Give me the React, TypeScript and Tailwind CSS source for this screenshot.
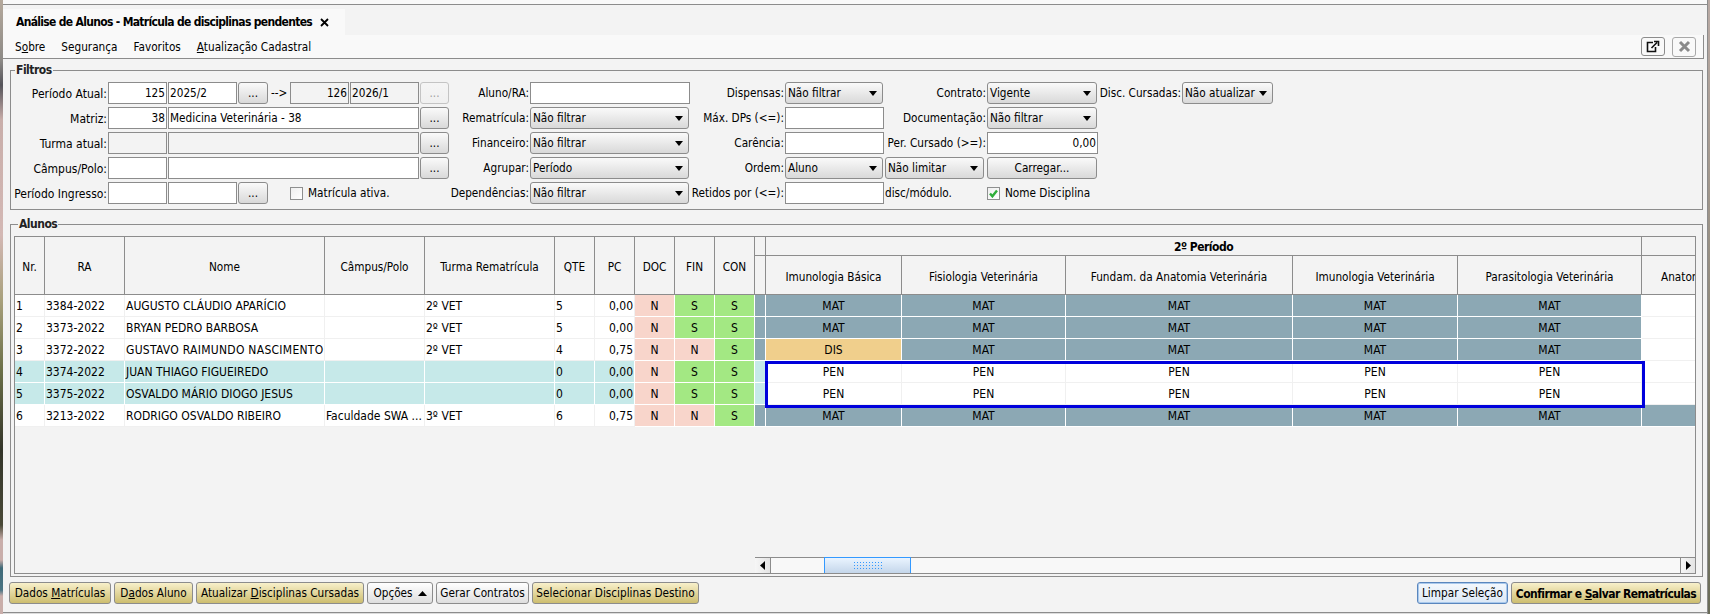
import React from "react";

type Tone = "mat" | "pen" | "dis" | "none" | "matEmpty";

interface IStudent {
  nr: string;
  ra: string;
  nome: string;
  nomeClass?: string;
  campus: string;
  turma: string;
  qte: string;
  pc: string;
  fin: string;
  teal?: boolean;
  disciplinas: Tone[];
}

const students: IStudent[] = [
  { nr: "1", ra: "3384-2022", nome: "AUGUSTO CLÁUDIO APARÍCIO", campus: "", turma: "2º VET", qte: "5", pc: "0,00", fin: "S", disciplinas: ["mat", "mat", "mat", "mat", "mat", "none"] },
  { nr: "2", ra: "3373-2022", nome: "BRYAN PEDRO BARBOSA", campus: "", turma: "2º VET", qte: "5", pc: "0,00", fin: "S", disciplinas: ["mat", "mat", "mat", "mat", "mat", "none"] },
  { nr: "3", ra: "3372-2022", nome: "GUSTAVO RAIMUNDO NASCIMENTO", nomeClass: "tracking-[0.28px]", campus: "", turma: "2º VET", qte: "4", pc: "0,75", fin: "N", disciplinas: ["dis", "mat", "mat", "mat", "mat", "none"] },
  { nr: "4", ra: "3374-2022", nome: "JUAN THIAGO FIGUEIREDO", campus: "", turma: "", qte: "0", pc: "0,00", fin: "S", teal: true, disciplinas: ["pen", "pen", "pen", "pen", "pen", "none"] },
  { nr: "5", ra: "3375-2022", nome: "OSVALDO MÁRIO DIOGO JESUS", campus: "", turma: "", qte: "0", pc: "0,00", fin: "S", teal: true, disciplinas: ["pen", "pen", "pen", "pen", "pen", "none"] },
  { nr: "6", ra: "3213-2022", nome: "RODRIGO OSVALDO RIBEIRO", campus: "Faculdade SWA ...", turma: "3º VET", qte: "6", pc: "0,75", fin: "N", disciplinas: ["mat", "mat", "mat", "mat", "mat", "matEmpty"] },
];

const Caret = () => (
  <svg width="8" height="5" viewBox="0 0 8 5" className="shrink-0">
    <path d="M0 0h8L4 5z" fill="#000" />
  </svg>
);

const Label = ({ text, span }: { text: string; span: string }) => (
  <div className={`${span} h-[22px] pt-px flex items-center justify-end pr-px whitespace-nowrap`}>{text}</div>
);

const Field = ({ value = "", span, off, right }: { value?: string; span: string; off?: boolean; right?: boolean }) => (
  <div
    className={`${span} h-[22px] mr-px pt-px border border-[#8c8c8c] flex items-center px-px whitespace-nowrap ${off ? "bg-[#f3f3f3]" : "bg-white"} ${right ? "justify-end" : ""}`}
  >
    {value}
  </div>
);

const Dots = ({ span, off }: { span: string; off?: boolean }) => (
  <div
    className={`${span} h-[22px] mr-px pt-[2px] rounded-[3px] border flex items-center justify-center bg-linear-to-b ${off ? "border-[#c4c4c4] from-[#f5f5f5] to-[#f0f0f0] text-[#a0a0a0]" : "border-[#8c8c8c] from-[#fafafa] to-[#d9d9d9]"}`}
  >
    ...
  </div>
);

const Select = ({ value, span }: { value: string; span: string }) => (
  <div className={`${span} h-[22px] mr-[2px] rounded-[3px] border border-[#8c8c8c] bg-linear-to-b from-[#fafafa] to-[#d9d9d9] flex items-center justify-between pl-[2px] pr-[5px] whitespace-nowrap`}>
    <span className="pt-px">{value}</span>
    <Caret />
  </div>
);

const Legend = ({ text }: { text: string }) => (
  <legend className="ml-[4px] px-px h-[14px] leading-[14px] font-bold tracking-[-0.5px] text-[12px] text-[#222]">{text}</legend>
);

const Filtros = () => (
  <fieldset className="ml-[7px] mr-[4px] mt-[4px] border border-[#8c8c8c] pt-[5px] pb-[5px]">
    <Legend text="Filtros" />
    <div className="grid gap-y-[3px] grid-cols-[97px_60px_70px_31px_21px_60px_70px_30px_80px_161px_94px_100px_102px_112px_83px_93px]">
      <Label span="col-start-1 text-[12px]" text="Período Atual:" />
      <Field span="col-start-2" value="125" right />
      <Field span="col-start-3" value="2025/2" />
      <Dots span="col-start-4" />
      <div className="col-start-5 h-[22px] pt-px flex items-center pl-[2px]">--&gt;</div>
      <Field span="col-start-6" value="126" right off />
      <Field span="col-start-7" value="2026/1" off />
      <Dots span="col-start-8" off />
      <Label span="col-start-9" text="Aluno/RA:" />
      <Field span="col-start-10" />
      <Label span="col-start-11" text="Dispensas:" />
      <Select span="col-start-12" value="Não filtrar" />
      <Label span="col-start-13" text="Contrato:" />
      <Select span="col-start-14" value="Vigente" />
      <Label span="col-start-15" text="Disc. Cursadas:" />
      <Select span="col-start-16" value="Não atualizar" />

      <Label span="col-start-1 text-[12px]" text="Matriz:" />
      <Field span="col-start-2" value="38" right />
      <Field span="col-start-3 col-end-8" value="Medicina Veterinária - 38" />
      <Dots span="col-start-8" />
      <Label span="col-start-9" text="Rematrícula:" />
      <Select span="col-start-10" value="Não filtrar" />
      <Label span="col-start-11" text="Máx. DPs (<=):" />
      <Field span="col-start-12 mr-[2px]" />
      <Label span="col-start-13" text="Documentação:" />
      <Select span="col-start-14" value="Não filtrar" />

      <Label span="col-start-1 text-[12px]" text="Turma atual:" />
      <Field span="col-start-2" off />
      <Field span="col-start-3 col-end-8" off />
      <Dots span="col-start-8" />
      <Label span="col-start-9" text="Financeiro:" />
      <Select span="col-start-10" value="Não filtrar" />
      <Label span="col-start-11" text="Carência:" />
      <Field span="col-start-12 mr-[2px]" />
      <Label span="col-start-13" text="Per. Cursado (>=):" />
      <Field span="col-start-14 mr-[2px]" value="0,00" right />

      <Label span="col-start-1 text-[12px]" text="Câmpus/Polo:" />
      <Field span="col-start-2" />
      <Field span="col-start-3 col-end-8" />
      <Dots span="col-start-8" />
      <Label span="col-start-9" text="Agrupar:" />
      <Select span="col-start-10" value="Período" />
      <Label span="col-start-11" text="Ordem:" />
      <Select span="col-start-12" value="Aluno" />
      <Select span="col-start-13 mr-[3px]" value="Não limitar" />
      <div className="col-start-14 h-[22px] mr-[2px] pt-px rounded-[3px] border border-[#8c8c8c] bg-linear-to-b from-[#fafafa] to-[#d9d9d9] flex items-center justify-center">
        Carregar...
      </div>

      <Label span="col-start-1 text-[12px]" text="Período Ingresso:" />
      <Field span="col-start-2" />
      <Field span="col-start-3" />
      <Dots span="col-start-4" />
      <div className="col-start-6 col-end-9 h-[22px] pt-px flex items-center gap-[5px]">
        <span className="w-[13px] h-[13px] border border-[#8e8f8f] bg-linear-to-br from-[#efefef] to-white" />
        Matrícula ativa.
      </div>
      <Label span="col-start-9" text="Dependências:" />
      <Select span="col-start-10" value="Não filtrar" />
      <Label span="col-start-11" text="Retidos por (<=):" />
      <Field span="col-start-12 mr-[2px]" />
      <div className="col-start-13 h-[22px] pt-px flex items-center">disc/módulo.</div>
      <div className="col-start-14 col-end-16 h-[22px] pt-px flex items-center gap-[5px]">
        <span className="w-[13px] h-[13px] border border-[#8e8f8f] bg-linear-to-br from-[#efefef] to-white flex items-center justify-center">
          <svg width="9" height="9" viewBox="0 0 9 9">
            <path d="M1 4.5l2.4 2.8L8 1.5" fill="none" stroke="#2fae3a" strokeWidth="2.4" />
          </svg>
        </span>
        Nome Disciplina
      </div>
    </div>
  </fieldset>
);

const headCell = "bg-[#f3f3f3] border-r border-b border-[#8c8c8c] flex items-center justify-center whitespace-nowrap overflow-hidden";
const rowCell = "h-[22px] text-[12px] border-r border-b flex items-center whitespace-nowrap overflow-hidden";

const toneClass: Record<Tone, string> = {
  mat: "bg-[#8ca8b4] border-white justify-center",
  pen: "bg-white border-[#f0f0f0] justify-center",
  dis: "bg-[#f0cf8c] border-white justify-center",
  none: "bg-white border-[#f0f0f0]",
  matEmpty: "bg-[#8ca8b4] border-white",
};

const toneText: Record<Tone, string> = { mat: "MAT", pen: "PEN", dis: "DIS", none: "", matEmpty: "" };

const flagClass = (value: string) => (value === "S" ? "bg-[#a3e883]" : "bg-[#f8d5cb]");

const Tabela = () => (
  <div className="relative h-[338px] border border-[#8c8c8c] flex flex-col">
    <div className="grid grid-cols-[30px_80px_200px_100px_130px_40px_40px_40px_40px_40px_11px_136px_164px_227px_165px_184px_53px] grid-rows-[19px_39px]">
      <div className={`${headCell} row-span-2 pt-[4px]`}>Nr.</div>
      <div className={`${headCell} row-span-2 pt-[4px]`}>RA</div>
      <div className={`${headCell} row-span-2 pt-[4px]`}>Nome</div>
      <div className={`${headCell} row-span-2 pt-[4px]`}>Câmpus/Polo</div>
      <div className={`${headCell} row-span-2 pt-[4px]`}>Turma Rematrícula</div>
      <div className={`${headCell} row-span-2 pt-[4px]`}>QTE</div>
      <div className={`${headCell} row-span-2 pt-[4px]`}>PC</div>
      <div className={`${headCell} row-span-2 pt-[4px]`}>DOC</div>
      <div className={`${headCell} row-span-2 pt-[4px]`}>FIN</div>
      <div className={`${headCell} row-span-2 pt-[4px]`}>CON</div>
      <div className={headCell} />
      <div className={`${headCell} col-span-5 pt-px font-bold tracking-[-0.5px] text-[12px]`}>2º Período</div>
      <div className="bg-[#f3f3f3] border-b border-[#8c8c8c]" />
      <div className={headCell} />
      <div className={`${headCell} pt-[5px]`}>Imunologia Básica</div>
      <div className={`${headCell} pt-[5px]`}>Fisiologia Veterinária</div>
      <div className={`${headCell} pt-[5px]`}>Fundam. da Anatomia Veterinária</div>
      <div className={`${headCell} pt-[5px]`}>Imunologia Veterinária</div>
      <div className={`${headCell} pt-[5px]`}>Parasitologia Veterinária</div>
      <div className="bg-[#f3f3f3] border-b border-[#8c8c8c] flex items-center pl-[19px] pt-[5px] whitespace-nowrap overflow-hidden">
        Anatomia Veterinária
      </div>

      {students.map((s) => {
        const base = s.teal ? "bg-[#c6e9e9] border-white" : "bg-white border-[#f0f0f0]";
        return (
          <React.Fragment key={s.nr}>
            <div className={`${rowCell} ${base} pl-px`}>{s.nr}</div>
            <div className={`${rowCell} ${base} pl-px`}>{s.ra}</div>
            <div className={`${rowCell} ${base} pl-px ${s.nomeClass ?? ""}`}>{s.nome}</div>
            <div className={`${rowCell} ${base} pl-px`}>{s.campus}</div>
            <div className={`${rowCell} ${base} pl-px`}>{s.turma}</div>
            <div className={`${rowCell} ${base} pl-px`}>{s.qte}</div>
            <div className={`${rowCell} ${base} justify-end pr-px`}>{s.pc}</div>
            <div className={`${rowCell} border-white justify-center ${flagClass("N")}`}>N</div>
            <div className={`${rowCell} border-white justify-center ${flagClass(s.fin)}`}>{s.fin}</div>
            <div className={`${rowCell} border-white justify-center ${flagClass("S")}`}>S</div>
            <div className={`${rowCell} border-white ${s.teal ? "bg-[#c6e9e9]" : "bg-[#8ca8b4]"}`} />
            {s.disciplinas.map((tone, i) => (
              <div key={i} className={`${rowCell} ${toneClass[tone]} ${i === 5 ? "border-r-0" : ""}`}>
                {toneText[tone]}
              </div>
            ))}
          </React.Fragment>
        );
      })}
    </div>

    <div className="mt-auto ml-[740px] h-[16px] border-t border-[#8c8c8c] flex">
      <div className="w-[16px] bg-linear-to-r from-[#f6f6f6] to-[#e4e4e4] border-r border-[#8c8c8c] flex items-center justify-center">
        <svg width="5" height="9" viewBox="0 0 5 9">
          <path d="M5 0v9L0 4.5z" fill="#000" />
        </svg>
      </div>
      <div className="w-[53px] bg-[#f8f8f8]" />
      <div className="w-[87px] -mt-px border-x border-t border-[#3399ff] bg-linear-to-b from-[#eaf4ff] to-[#c4d6ea] flex items-center justify-center">
        <div className="w-[30px] h-[9px] bg-[radial-gradient(#3399ff_1px,transparent_1px)] bg-size-[3px_3px]" />
      </div>
      <div className="flex-1 bg-[#f8f8f8]" />
      <div className="w-[15px] bg-linear-to-r from-[#f6f6f6] to-[#e4e4e4] border-l border-[#8c8c8c] flex items-center justify-center">
        <svg width="5" height="9" viewBox="0 0 5 9">
          <path d="M0 0v9l5-4.5z" fill="#000" />
        </svg>
      </div>
    </div>

    {/* destaque azul sobre as disciplinas pendentes */}
    <div className="absolute left-[750px] top-[124px] w-[880px] h-[47px] border-[3px] border-[#0000dc]" />
  </div>
);

const yellow = "border-[#8c8c8c] bg-linear-to-b from-[#f8f0ca] to-[#cdbd6e]";
const white = "border-[#8c8c8c] bg-linear-to-b from-white to-[#dedede]";

const Acao = ({ className, children }: { className: string; children: React.ReactNode }) => (
  <div className={`h-[22px] pt-px rounded-[3px] border flex items-center justify-center whitespace-nowrap ${className}`}>{children}</div>
);

const Rodape = () => (
  <div className="mt-[5px] ml-[6px] mr-[6px] flex">
    <div className="flex gap-[3px]">
      <Acao className={`w-[102px] ${yellow}`}>
        Dados&nbsp;<u>M</u>atrículas
      </Acao>
      <Acao className={`w-[79px] ${yellow}`}>
        D<u>a</u>dos Aluno
      </Acao>
      <Acao className={`w-[168px] ${yellow}`}>
        Atualizar&nbsp;<u>D</u>isciplinas Cursadas
      </Acao>
      <Acao className={`w-[66px] gap-[5px] ${white}`}>
        Opções
        <svg width="9" height="5" viewBox="0 0 9 5">
          <path d="M0 5h9L4.5 0z" fill="#000" />
        </svg>
      </Acao>
      <Acao className={`w-[93px] ${white}`}>Gerar Contratos</Acao>
      <Acao className={`w-[167px] ${yellow}`}>Selecionar Disciplinas Destino</Acao>
    </div>
    <div className="ml-auto flex gap-[3px]">
      <Acao className="w-[91px] border-[#5a86bd] bg-linear-to-b from-[#f4f8fd] to-[#dce8f5] shadow-[inset_0_0_0_1px_#a9c9ec]">Limpar Seleção</Acao>
      <Acao className={`w-[190px] font-bold text-[12px] tracking-[-0.55px] ${yellow}`}>
        Confirmar e&nbsp;<u>S</u>alvar Rematrículas
      </Acao>
    </div>
  </div>
);

const App = () => {
  return (
    <div className="w-[1710px] h-[614px] overflow-hidden flex bg-[#f3f3f3] text-black text-[11.7px] leading-none font-['DejaVu_Sans_Condensed','DejaVu_Sans',sans-serif] [font-stretch:condensed]">
      <div className="w-[3px] bg-[linear-gradient(180deg,#b5a99c_0px,#8d8a86_60px,#55545a_85px,#c9aeaa_120px,#d3b8b4_235px,#a8a07c_300px,#6c7048_370px,#33352a_450px,#4a4a38_525px,#c9aeaa_540px,#c9aeaa_560px,#3f6a78_568px,#4a7484_590px,#c9aeaa_596px)]" />
      <div className="flex-1 flex flex-col border-r border-[#8c8c8c]">
        <div className="h-[5px] bg-[#f9f9f9] border-b border-[#8c8c8c]" />
        <div className="h-[30px] flex items-end">
          <div className="w-[342px] h-[26px] bg-[#f9f9f9] flex items-center pl-[13px] gap-[8px] font-bold text-[12px] tracking-[-0.68px] whitespace-nowrap">
            Análise de Alunos - Matrícula de disciplinas pendentes
            <svg width="9" height="9" viewBox="0 0 9 9">
              <path d="M1 1l7 7M8 1L1 8" stroke="#000" strokeWidth="1.8" />
            </svg>
          </div>
        </div>
        <div className="h-[24px] mr-[3px] bg-[#f9f9f9] border-b border-r border-[#8c8c8c] flex items-center pl-[12px] gap-[16px]">
          <span className="pt-[3px]">
            S<u>o</u>bre
          </span>
          <span className="pt-[3px]">Segurança</span>
          <span className="pt-[3px]">Favoritos</span>
          <span className="pt-[3px]">
            <u>A</u>tualização Cadastral
          </span>
          <div className="ml-auto mr-[7px] flex gap-[7px]">
            <div className="w-[24px] h-[19px] rounded-[3px] border border-[#8c8c8c] flex items-center justify-center">
              <svg width="14" height="13" viewBox="0 0 14 13">
                <path d="M7 2.5H1.5v9h8V7" fill="none" stroke="#111" strokeWidth="1.6" />
                <path d="M5.5 8L11 2.5M8 1.5h4.5V6" fill="none" stroke="#111" strokeWidth="1.6" />
              </svg>
            </div>
            <div className="w-[24px] h-[20px] rounded-[3px] border border-[#a8a8a8] flex items-center justify-center">
              <svg width="13" height="13" viewBox="0 0 13 13">
                <path d="M2 2l9 9M11 2l-9 9" stroke="#8a8a8a" strokeWidth="3" />
              </svg>
            </div>
          </div>
        </div>
        <Filtros />
        <fieldset className="ml-[7px] mr-[4px] mt-[7px] border border-[#8c8c8c] h-[360px] pt-[5px] pl-[3px] pr-[6px]">
          <Legend text="Alunos" />
          <Tabela />
        </fieldset>
        <Rodape />
        <div className="mt-auto h-[2px] border-t border-[#8c8c8c] bg-[#dcdcdc]" />
      </div>
      <div className="w-[2px] bg-linear-to-b from-[#b9aaa4] to-[#6a6c58]" />
    </div>
  );
};

export default App;
